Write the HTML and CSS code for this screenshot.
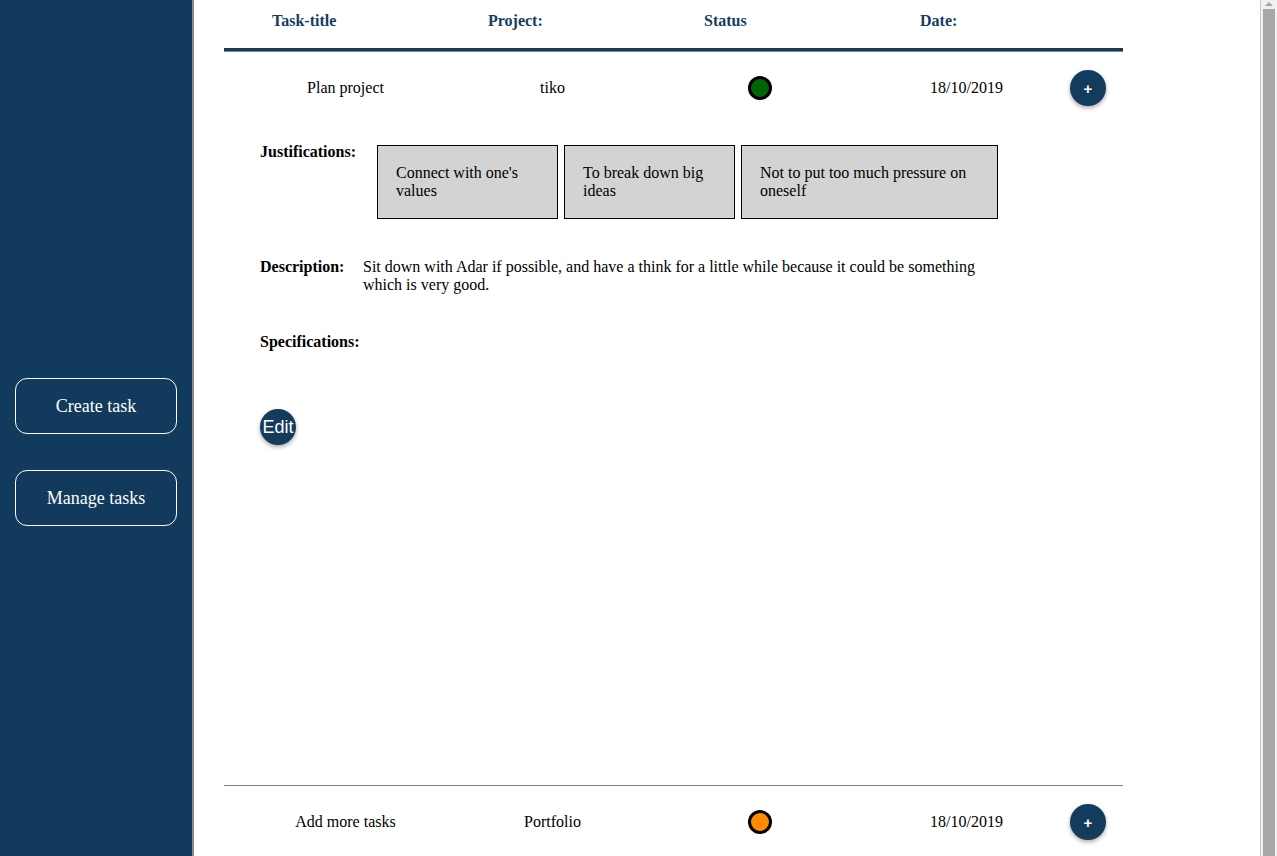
FILE: index.html
```html
<!DOCTYPE html>
<html lang="en">
<head>
<meta charset="utf-8">
<title>Tasks</title>
<link rel="stylesheet" href="styles.css">
</head>
<body>
<aside class="sidebar">
  <nav class="side-nav">
    <a class="side-btn" href="#">Create task</a>
    <a class="side-btn" href="#">Manage tasks</a>
  </nav>
</aside>
<main class="main">
  <section class="tasks">
    <div class="thead">
      <div>Task-title</div>
      <div>Project:</div>
      <div>Status</div>
      <div>Date:</div>
    </div>

    <div class="trow">
      <div class="cell">Plan project</div>
      <div class="cell">tiko</div>
      <div class="cell"><span class="dot dot-green"></span></div>
      <div class="cell">18/10/2019</div>
      <button class="plus">+</button>
    </div>

    <div class="details">
      <div class="just-row">
        <div class="label just-label">Justifications:</div>
        <div class="just-boxes">
          <div class="just-box">Connect with one's values</div>
          <div class="just-box">To break down big ideas</div>
          <div class="just-box">Not to put too much pressure on oneself</div>
        </div>
      </div>
      <div class="desc-row">
        <div class="label desc-label">Description:</div>
        <div class="desc-text">Sit down with Adar if possible, and have a think for a little while because it could be something which is very good.</div>
      </div>
      <div class="spec-row">
        <div class="label">Specifications:</div>
      </div>
      <button class="edit">Edit</button>
    </div>

    <div class="trow trow-sep">
      <div class="cell">Add more tasks</div>
      <div class="cell">Portfolio</div>
      <div class="cell"><span class="dot dot-orange"></span></div>
      <div class="cell">18/10/2019</div>
      <button class="plus">+</button>
    </div>
  </section>
</main>
<div class="scrollbar">
  <div class="scroll-arrow"></div>
  <div class="scroll-thumb"></div>
</div>
</body>
</html>
```
FILE: styles.css
```css
html, body {
  margin: 0;
  padding: 0;
}
body {
  display: flex;
  height: 856px;
  overflow: hidden;
  font-family: "Liberation Serif", "Times New Roman", serif;
  font-size: 16px;
  line-height: 18px;
  color: #000;
  background: #fff;
}
.sidebar {
  width: 192px;
  flex: none;
  background: #113a5c;
  border-right: 2px solid #8c8c8c;
}
.side-nav {
  display: flex;
  flex-direction: column;
  gap: 36px;
  padding: 378px 0 0 15px;
}
.side-btn {
  box-sizing: border-box;
  width: 162px;
  height: 56px;
  display: flex;
  align-items: center;
  justify-content: center;
  border: 1px solid #fff;
  border-radius: 12px;
  color: #fff;
  text-decoration: none;
  font-size: 18px;
}
.main {
  flex: 1;
  min-width: 0;
}
.tasks {
  margin-left: 30px;
  width: 899px;
}
.thead {
  box-sizing: border-box;
  height: 51px;
  padding: 12px 0 0 48px;
  display: grid;
  grid-template-columns: repeat(4, 216px);
  align-items: start;
  font-weight: bold;
  color: #163d5e;
  border-bottom: 3px solid #133b5c;
  box-shadow: 0 1px 0 #7d8a96;
}
.trow {
  display: grid;
  grid-template-columns: repeat(4, 207px) 36px;
  align-items: center;
  padding: 19px 0 0 18px;
}
.trow-sep {
  border-top: 1px solid #808080;
  padding-top: 18px;
}
.cell {
  text-align: center;
  display: flex;
  justify-content: center;
  align-items: center;
}
.dot {
  display: block;
  width: 18px;
  height: 18px;
  border: 3px solid #000;
  border-radius: 50%;
}
.dot-green { background: #006400; }
.dot-orange { background: #ff8c00; }
.plus {
  width: 36px;
  height: 36px;
  border: none;
  border-radius: 50%;
  background: #133b5c;
  color: #fff;
  font-family: "Liberation Sans", Arial, sans-serif;
  font-weight: bold;
  font-size: 15px;
  padding: 0;
  box-shadow: 0 2px 4px rgba(0, 0, 0, 0.35);
  display: flex;
  align-items: center;
  justify-content: center;
}
.details {
  padding: 37px 0 340px 36px;
}
.label {
  font-weight: bold;
}
.just-row {
  display: flex;
  align-items: flex-start;
}
.just-label {
  width: 117px;
  flex: none;
}
.just-boxes {
  margin-top: 2px;
  display: grid;
  grid-template-columns: 181px 171px 257px;
  column-gap: 6px;
}
.just-box {
  background: #d3d3d3;
  border: 1px solid #000;
  padding: 18px;
}
.desc-row {
  display: flex;
  margin-top: 39px;
}
.desc-label {
  width: 103px;
  flex: none;
}
.desc-text {
  width: 640px;
}
.spec-row {
  margin-top: 39px;
}
.edit {
  margin-top: 58px;
  width: 36px;
  height: 36px;
  border: none;
  border-radius: 50%;
  background: #133b5c;
  color: #fff;
  font-family: "Liberation Sans", Arial, sans-serif;
  font-size: 18px;
  padding: 0;
  box-shadow: 0 2px 4px rgba(0, 0, 0, 0.35);
  display: flex;
  align-items: center;
  justify-content: center;
}
.scrollbar {
  width: 16px;
  flex: none;
  background: #f1f1f1;
  border-left: 1px solid #c9c9c9;
  display: flex;
  flex-direction: column;
  align-items: center;
}
.scroll-arrow {
  margin-top: 2px;
  width: 0;
  height: 0;
  border-left: 4px solid transparent;
  border-right: 4px solid transparent;
  border-bottom: 4px solid #a3a3a3;
}
.scroll-thumb {
  margin-top: 3px;
  width: 12px;
  flex: 1;
  background: #a8a8a8;
}
```
